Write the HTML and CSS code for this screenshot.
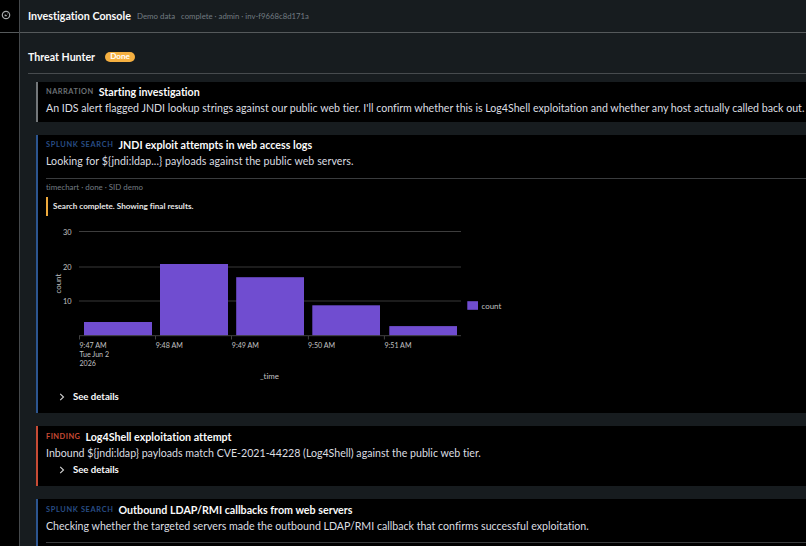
FILE: index.html
```html
<!DOCTYPE html>
<html lang="en">
<head>
    <meta charset="UTF-8">
    <meta name="viewport" content="width=device-width, initial-scale=1.0">
    <title>Investigation Console</title>
    <link rel="stylesheet" href="styles.css">
</head>
<body>

    <aside class="sidebar">
        <div class="sidebar-top">
            <svg class="target-icon" viewBox="0 0 10 10">
                <circle cx="5" cy="5" r="3.7" />
                <path d="M4.2 4.4v1.3h1.6M6.1 3.9h.4" />
            </svg>
        </div>
    </aside>

    <div class="main">
        <header class="topbar">
            <h1>Investigation Console</h1>
            <span class="demo">Demo data</span>
            <span class="status">complete · admin · inv-f9668c8d171a</span>
        </header>

        <div class="content">
            <div class="agent">
                <h2>Threat Hunter</h2>
                <span class="badge">Done</span>
            </div>

            <div class="cards">
                <section class="card">
                    <div class="card-title">
                        <span class="label">Narration</span>
                        <h3>Starting investigation</h3>
                    </div>
                    <p>An IDS alert flagged JNDI lookup strings against our public web tier. I'll confirm whether this is Log4Shell exploitation and whether any host actually called back out.</p>
                </section>

                <section class="card search">
                    <div class="card-title">
                        <span class="label">Splunk Search</span>
                        <h3>JNDI exploit attempts in web access logs</h3>
                    </div>
                    <p class="query">Looking for ${jndi:ldap...} payloads against the public web servers.</p>
                    <div class="results">
                        <div class="meta">timechart · done · SID demo</div>
                        <div class="alert">Search complete. Showing final results.</div>
                        <svg class="chart" width="470" height="165" viewBox="46 220 470 165">
                            <g class="grid">
                                <path class="grid-top" d="M79 231.5H461" />
                                <path d="M79 267H461M79 301H461" />
                            </g>
                            <g class="bars">
                                <rect x="84" y="322" width="68" height="13.5" />
                                <rect x="160" y="264" width="68" height="71.5" />
                                <rect x="236.2" y="277.2" width="67.8" height="58.3" />
                                <rect x="312.3" y="305.3" width="67.7" height="30.2" />
                                <rect x="389.3" y="326.1" width="67.7" height="9.4" />
                            </g>
                            <path class="axis" d="M79 335.7H461M79.5 336v3.5M155.5 336v3.5M231.5 336v3.5M308.4 336v3.5M384.4 336v3.5" />
                            <g class="y-labels">
                                <text x="71.5" y="234.7">30</text>
                                <text x="71.5" y="269.5">20</text>
                                <text x="71.5" y="303.7">10</text>
                            </g>
                            <g>
                                <text x="79.5" y="347.5">9:47 AM</text>
                                <text x="79.5" y="357">Tue Jun 2</text>
                                <text x="79.5" y="366.3">2026</text>
                                <text x="155.7" y="347.5">9:48 AM</text>
                                <text x="231.8" y="347.5">9:49 AM</text>
                                <text x="308" y="347.5">9:50 AM</text>
                                <text x="384.4" y="347.5">9:51 AM</text>
                            </g>
                            <text class="axis-title" transform="translate(61 293.5) rotate(-90)">count</text>
                            <text class="axis-title" x="260" y="378.5">_time</text>
                            <rect class="swatch" x="467.3" y="301.2" width="10.7" height="8.6" />
                            <text class="axis-title" x="481.5" y="308.8">count</text>
                        </svg>
                    </div>
                    <div class="details">
                        <svg class="chevron" viewBox="0 0 6 8"><path d="M1.2 .8 4.5 4 1.2 7.2" /></svg>
                        See details
                    </div>
                </section>

                <section class="card finding">
                    <div class="card-title">
                        <span class="label">Finding</span>
                        <h3>Log4Shell exploitation attempt</h3>
                    </div>
                    <p>Inbound ${jndi:ldap} payloads match CVE-2021-44228 (Log4Shell) against the public web tier.</p>
                    <div class="details">
                        <svg class="chevron" viewBox="0 0 6 8"><path d="M1.2 .8 4.5 4 1.2 7.2" /></svg>
                        See details
                    </div>
                </section>

                <section class="card search">
                    <div class="card-title">
                        <span class="label">Splunk Search</span>
                        <h3>Outbound LDAP/RMI callbacks from web servers</h3>
                    </div>
                    <p>Checking whether the targeted servers made the outbound LDAP/RMI callback that confirms successful exploitation.</p>
                    <div class="results"></div>
                </section>
            </div>
        </div>
    </div>

</body>
</html>
```
FILE: styles.css
```css
* {
    box-sizing: border-box;
}
body {
    margin: 0;
    height: 100vh;
    display: flex;
    overflow: hidden;
    font-family: Lato, "Liberation Sans", sans-serif;
    font-size: 10.62px;
    line-height: 16px;
    font-variant-ligatures: none;
    color: #dcdee0;
    background-color: #171c1f;
    white-space: nowrap;
}
h1, h2, h3, p {
    margin: 0;
    font-size: inherit;
}
h1, h2, h3 {
    color: #fafafa;
}
.sidebar {
    flex: none;
    width: 20px;
    background-color: #000;
    border-right: 1px solid #45494c;
}
.sidebar-top {
    height: 33px;
    padding: 10px 0 0 1px;
    border-bottom: 1px solid #55595b;
}
.target-icon {
    display: block;
    width: 10px;
    height: 10px;
    fill: none;
    stroke: #a5a8aa;
    stroke-width: 1.2;
}
.main {
    flex: 1;
    min-width: 0;
}
.topbar {
    display: flex;
    align-items: center;
    height: 33px;
    padding-left: 8px;
    border-bottom: 1px solid #55595b;
    font-size: 7.75px;
    color: #727b81;
}
.topbar h1 {
    font-size: 10.75px;
}
.demo {
    margin-left: 6px;
    font-size: 7.9px;
}
.status {
    margin-left: 6px;
}
.content {
    padding: 16px 0 0 8px;
}
.agent {
    display: flex;
    align-items: center;
    height: 25px;
    padding-bottom: 9px;
    border-bottom: 1px solid #474b4e;
}
.badge {
    margin-left: 10px;
    width: 30px;
    height: 10px;
    border-radius: 5px;
    background-color: #f5b041;
    color: #fff;
    font-size: 8.2px;
    font-weight: bold;
    line-height: 9px;
    text-align: center;
}
.cards {
    display: flex;
    flex-direction: column;
    gap: 13.3px;
    padding: 7.6px 0 0 8px;
}
.card {
    padding: 2.6px 0 5.4px 8px;
    border-left: 2px solid #73777a;
    background-color: #000;
}
.card-title {
    display: flex;
    align-items: center;
    gap: 5px;
    height: 16px;
}
.card-title h3 {
    font-size: 10.7px;
}
.label {
    font-size: 7.4px;
    font-weight: bold;
    letter-spacing: 0.5px;
    text-transform: uppercase;
    color: #6c7175;
}
.search {
    border-left-color: #2c5590;
}
.search .label {
    letter-spacing: 0.65px;
    color: #284d85;
}
.finding {
    border-left-color: #c84b35;
}
.finding .label {
    color: #c84b35;
}
.query {
    letter-spacing: 0.06px;
}
.results {
    margin-top: 8.4px;
    border-top: 1px solid #3a3c3e;
}
.meta {
    font-size: 7.9px;
    color: #747c83;
}
.alert {
    height: 19px;
    margin-top: 2px;
    padding-left: 5px;
    border-left: 2px solid #eda93c;
    font-size: 8.15px;
    font-weight: bold;
    line-height: 18px;
    color: #e6e6e6;
}
.details {
    display: flex;
    align-items: center;
    gap: 8px;
    height: 18px;
    margin-bottom: 1.6px;
    padding-left: 13px;
    font-size: 9.6px;
    font-weight: bold;
    color: #fafafa;
}
.chevron {
    width: 6px;
    height: 8px;
    fill: none;
    stroke: #d5d5d5;
    stroke-width: 1.1;
}

/* Chart */
.chart {
    display: block;
    margin: 4px 0 3px;
    font-size: 7.1px;
    fill: #c0c1c2;
}
.grid {
    stroke: #262626;
    stroke-width: 1.3;
}
.grid-top {
    stroke: #3d3d3d;
    stroke-width: 1;
}
.bars, .swatch {
    fill: #704dd0;
}
.axis {
    fill: none;
    stroke: #474747;
    stroke-width: 0.9;
}
.y-labels {
    font-size: 7.4px;
    text-anchor: end;
}
.axis-title {
    font-size: 7.9px;
}
```
